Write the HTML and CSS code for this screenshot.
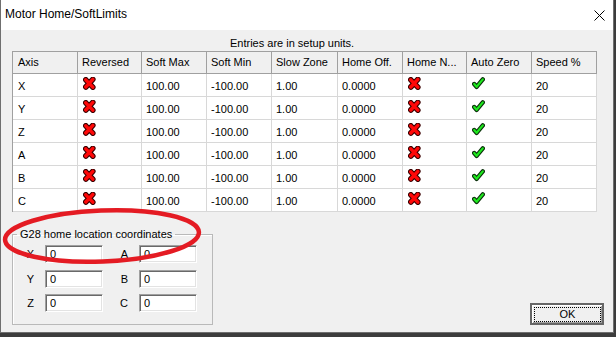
FILE: index.html
```html
<!DOCTYPE html>
<html>
<head>
<meta charset="utf-8">
<link rel="stylesheet" href="styles.css">
</head>
<body>
<div class="window">
  <div class="titlebar">
    <span class="title">Motor Home/SoftLimits</span>
    <svg class="close" width="11" height="11" viewBox="0 0 11 11"><path d="M0.5 0.5 L10.5 10.5 M10.5 0.5 L0.5 10.5" stroke="#000" stroke-width="1"/></svg>
  </div>
  <div class="body">
    <div class="note">Entries are in setup units.</div>
    <div class="grid">
      <div class="h first">Axis</div><div class="h">Reversed</div><div class="h">Soft Max</div><div class="h">Soft Min</div><div class="h">Slow Zone</div><div class="h">Home Off.</div><div class="h">Home N...</div><div class="h">Auto Zero</div><div class="h">Speed %</div>

      <div class="c first">X</div><div class="c"><svg class="ico"><use href="#xmark"/></svg></div><div class="c">100.00</div><div class="c">-100.00</div><div class="c">1.00</div><div class="c">0.0000</div><div class="c"><svg class="ico"><use href="#xmark"/></svg></div><div class="c"><svg class="ico"><use href="#check"/></svg></div><div class="c">20</div>

      <div class="c first">Y</div><div class="c"><svg class="ico"><use href="#xmark"/></svg></div><div class="c">100.00</div><div class="c">-100.00</div><div class="c">1.00</div><div class="c">0.0000</div><div class="c"><svg class="ico"><use href="#xmark"/></svg></div><div class="c"><svg class="ico"><use href="#check"/></svg></div><div class="c">20</div>

      <div class="c first">Z</div><div class="c"><svg class="ico"><use href="#xmark"/></svg></div><div class="c">100.00</div><div class="c">-100.00</div><div class="c">1.00</div><div class="c">0.0000</div><div class="c"><svg class="ico"><use href="#xmark"/></svg></div><div class="c"><svg class="ico"><use href="#check"/></svg></div><div class="c">20</div>

      <div class="c first">A</div><div class="c"><svg class="ico"><use href="#xmark"/></svg></div><div class="c">100.00</div><div class="c">-100.00</div><div class="c">1.00</div><div class="c">0.0000</div><div class="c"><svg class="ico"><use href="#xmark"/></svg></div><div class="c"><svg class="ico"><use href="#check"/></svg></div><div class="c">20</div>

      <div class="c first">B</div><div class="c"><svg class="ico"><use href="#xmark"/></svg></div><div class="c">100.00</div><div class="c">-100.00</div><div class="c">1.00</div><div class="c">0.0000</div><div class="c"><svg class="ico"><use href="#xmark"/></svg></div><div class="c"><svg class="ico"><use href="#check"/></svg></div><div class="c">20</div>

      <div class="c first">C</div><div class="c"><svg class="ico"><use href="#xmark"/></svg></div><div class="c">100.00</div><div class="c">-100.00</div><div class="c">1.00</div><div class="c">0.0000</div><div class="c"><svg class="ico"><use href="#xmark"/></svg></div><div class="c"><svg class="ico"><use href="#check"/></svg></div><div class="c">20</div>
    </div>
    <div class="bottom">
      <fieldset class="group">
        <legend>G28 home location coordinates</legend>
        <div class="coords">
          <label>X</label><input class="field" value="0"><label>A</label><input class="field" value="0">
          <label>Y</label><input class="field" value="0"><label>B</label><input class="field" value="0">
          <label>Z</label><input class="field" value="0"><label>C</label><input class="field" value="0">
        </div>
      </fieldset>
      <button class="ok"><span class="focus">OK</span></button>
    </div>
  </div>
  <svg class="ring" width="210" height="70" viewBox="0 0 210 70">
    <ellipse cx="101" cy="33" rx="97" ry="25.5" transform="rotate(-2.3 101 33)" fill="none" stroke="#e41b23" stroke-width="4.5"/>
  </svg>
</div>

<svg width="0" height="0" class="defs">
  <defs>
    <g id="xmark">
      <path d="M2.8 2.8 L9.8 10.2 M9.8 2.4 L2.8 10" stroke="#3a0000" stroke-width="5.6" stroke-linecap="round" fill="none"/>
      <path d="M2.8 2.8 L9.8 10.2 M9.8 2.4 L2.8 10" stroke="#ff0808" stroke-width="3.4" stroke-linecap="round" fill="none"/>
    </g>
    <g id="check">
      <path d="M2.2 7 L4.6 9.8 L10.8 2.4" stroke="#0a300a" stroke-width="4.4" stroke-linecap="round" stroke-linejoin="round" fill="none"/>
      <path d="M2.2 7 L4.6 9.8 L10.8 2.4" stroke="#1ee81e" stroke-width="2.2" stroke-linecap="round" stroke-linejoin="round" fill="none"/>
    </g>
  </defs>
</svg>
</body>
</html>
```

FILE: styles.css
```css
html, body {
  margin: 0;
  padding: 0;
  background: #3c3c3c;
  width: 616px;
  height: 337px;
  overflow: hidden;
}

body {
  font-family: "Liberation Sans", Arial, sans-serif;
  font-size: 11px;
  color: #000;
}

.defs {
  position: absolute;
  width: 0;
  height: 0;
}

.window {
  position: relative;
  width: 614px;
  box-sizing: border-box;
  border-left: 1px solid #6f6f6f;
  border-right: 1px solid #6f6f6f;
  border-bottom: 1px solid #6f6f6f;
  background: #f0f0f0;
  display: flex;
  flex-direction: column;
}

.titlebar {
  height: 30px;
  background: #fff;
  display: flex;
  align-items: center;
  padding-left: 4px;
  padding-right: 8px;
}

.title {
  font-size: 12px;
  flex: 1;
  padding-bottom: 3px;
}

.close {
  display: block;
  margin-top: 1px;
}

.body {
  padding: 7px 9px 7px 11px;
  display: flex;
  flex-direction: column;
}

.note {
  line-height: 13px;
  padding-left: 218px;
  margin-bottom: 1px;
}

.grid {
  display: grid;
  grid-template-columns: 65px 64px 65px 65px 66px 65px 64px 65px 65px;
  width: max-content;
  border-left: 1px solid #a0a0a0;
  border-top: 1px solid #a0a0a0;
  background: #fff;
}

.h {
  height: 22px;
  box-sizing: border-box;
  background: #f0f0f0;
  border-right: 1px solid #a0a0a0;
  border-bottom: 1px solid #a0a0a0;
  line-height: 21px;
  padding-left: 4px;
  white-space: nowrap;
  overflow: hidden;
}

.c {
  height: 23px;
  box-sizing: border-box;
  border-right: 1px solid #d8d8d8;
  border-bottom: 1px solid #d8d8d8;
  padding: 2px 4px 0 4px;
  line-height: 20px;
  white-space: nowrap;
}

.first {
  padding-left: 5px;
}

.ico {
  display: block;
  width: 13px;
  height: 13px;
  margin: 1px 0 0 1px;
}

.bottom {
  display: flex;
  align-items: flex-end;
  margin-top: 16px;
}

.group {
  width: 201px;
  box-sizing: border-box;
  margin: 0;
  padding: 0 4px 12px 4px;
  border: 1px solid #b9b9b9;
  box-shadow: inset 1px 1px 0 #fff;
}

.group legend {
  padding: 0 3px;
  line-height: 13px;
}

.coords {
  display: grid;
  grid-template-columns: 28px 58px 36px 58px;
  grid-template-rows: 18px 18px 18px;
  row-gap: 6.5px;
  margin-top: 4px;
}

.coords label {
  text-align: right;
  padding-right: 11px;
  line-height: 18px;
}

.field {
  width: 58px;
  height: 18px;
  box-sizing: border-box;
  margin: 0;
  padding: 0 0 0 4px;
  border: 1px solid;
  border-color: #a0a0a0 #fff #fff #a0a0a0;
  box-shadow: inset 1px 1px 0 #696969, inset -1px -1px 0 #e3e3e3;
  background: #fff;
  font-family: "Liberation Sans", Arial, sans-serif;
  font-size: 11px;
  color: #000;
  outline: none;
}

.ok {
  margin-left: auto;
  width: 74px;
  height: 22px;
  box-sizing: border-box;
  padding: 2px 1px 1px 2px;
  border: 2px solid #666;
  box-shadow: inset 1px 1px 0 #fff, inset -1px -1px 0 #a0a0a0;
  background: #f0f0f0;
  display: flex;
  font-family: "Liberation Sans", Arial, sans-serif;
  font-size: 11px;
  color: #000;
}

.focus {
  flex: 1;
  border: 1px dotted #000;
  line-height: 13px;
  text-align: center;
}

.ring {
  position: absolute;
  left: 0;
  top: 203px;
}
```
